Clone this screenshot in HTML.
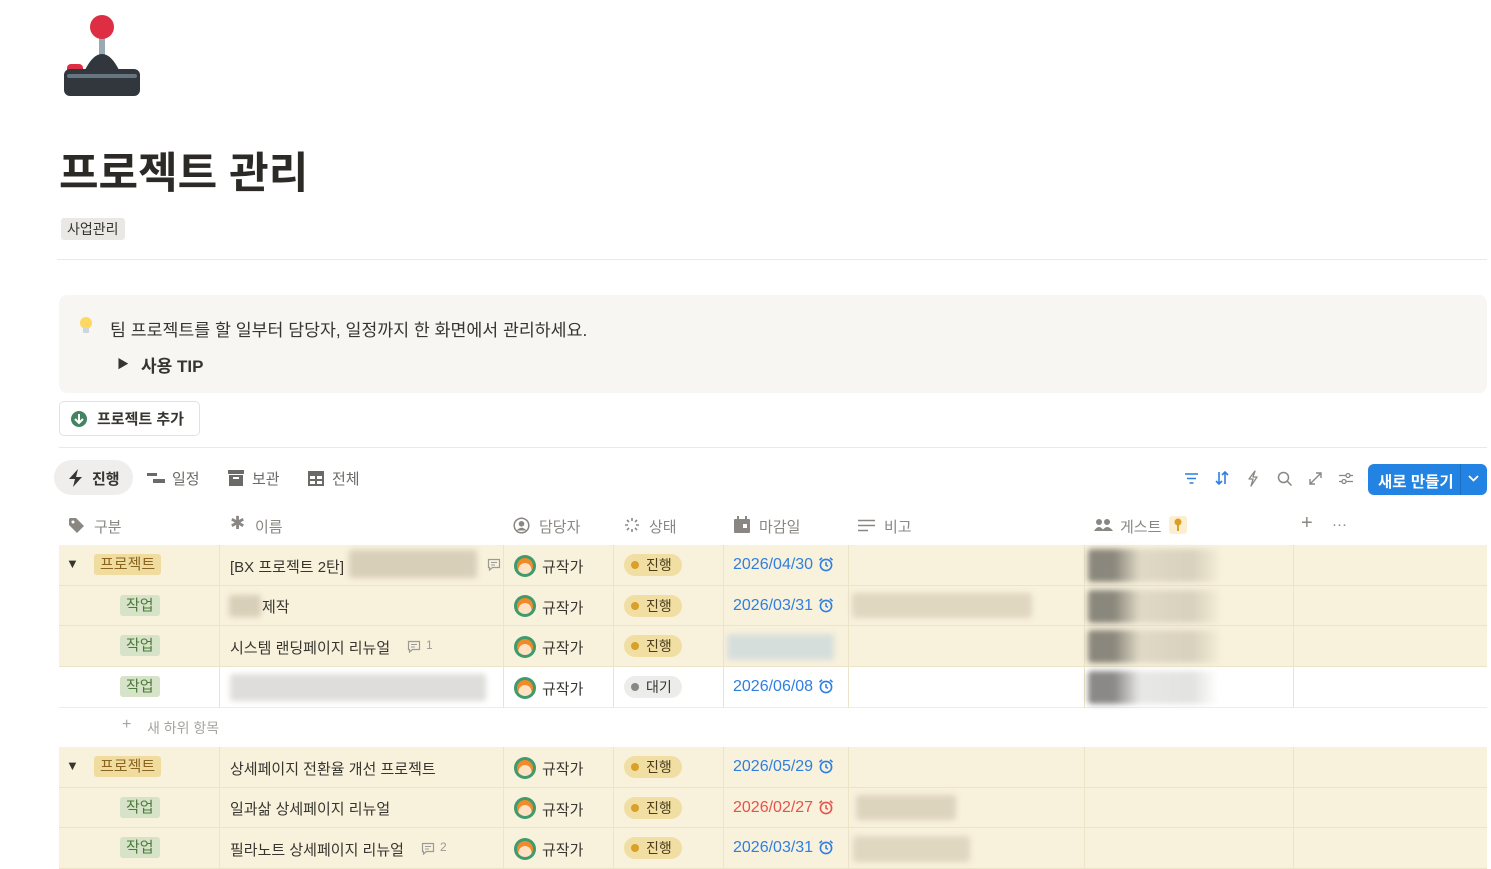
<!DOCTYPE html>
<html><head><meta charset="utf-8"><style>
*{box-sizing:border-box;margin:0;padding:0}
body{width:1491px;height:869px;overflow:hidden;background:#fff;font-family:"Liberation Sans","Noto Sans CJK KR",sans-serif;color:#37352f;position:relative}
.a{position:absolute}
.row{position:absolute;left:59px;width:1428px;border-bottom:1px solid #ece3c9}
.cream{background:#f8f1dc}
.t{position:absolute;font-size:15px;white-space:nowrap}
.tag{position:absolute;font-size:15px;padding:0 6px;border-radius:3px;line-height:21px}
.pj{background:#f1dca0;color:#8a6520}
.wk{background:#d6e3c8;color:#4c7a3a}
.pill{position:absolute;left:624px;font-size:14px;padding:0 10px 0 22px;border-radius:11px;line-height:22px;background:#f1dea2;color:#4a3d1e}
.pill:before{content:"";position:absolute;left:7px;top:7px;width:8px;height:8px;border-radius:50%;background:#d9a02a}
.pill.w{background:#ececea;color:#37352f}.pill.w:before{background:#8a8784}
.date{position:absolute;left:733px;font-size:16px;color:#2f7fe0;white-space:nowrap}
.date svg{vertical-align:-3px;margin-left:5px}
.av{position:absolute;left:514px;width:22px;height:22px;border-radius:50%;background:#3f9a6e;overflow:hidden}
.av:after{content:"";position:absolute;left:3px;top:3px;width:16px;height:16px;border-radius:50%;background:radial-gradient(circle at 50% 72%,#ffe1c4 45%,#f08a2a 47%)}
.nm{position:absolute;left:542px;font-size:15px}
.blur{position:absolute;filter:blur(3px);border-radius:3px}
.hd{position:absolute;top:516px;font-size:15px;color:#8a8782;white-space:nowrap}
</style></head><body>
<svg width="0" height="0" style="position:absolute"><defs>
<symbol id="clk" viewBox="0 0 16 16"><circle cx="8" cy="9" r="5.6" fill="none" stroke="currentColor" stroke-width="1.6"/><path d="M8 6v3.2l2 1.2" fill="none" stroke="currentColor" stroke-width="1.5"/><path d="M1.5 4.2L4 1.8M14.5 4.2L12 1.8" stroke="currentColor" stroke-width="1.6" fill="none"/></symbol>
</defs></svg>
<svg class="a" style="left:63px;top:14px" width="80" height="84" viewBox="0 0 80 84">
<rect x="36" y="20" width="6" height="22" fill="#99aab5"/>
<circle cx="39" cy="13" r="12" fill="#dd2e44"/>
<rect x="4" y="50" width="16" height="10" rx="4" fill="#dd2e44"/>
<path d="M22 56 Q30 40 39 40 Q48 40 56 56Z" fill="#31373d"/>
<rect x="1" y="55" width="76" height="27" rx="6" fill="#31373d"/>
<rect x="4" y="60" width="70" height="4" rx="2" fill="#66757f"/>
</svg>
<div class="t" style="left:59px;top:139px;font-size:43px;font-weight:bold;color:#2b2a27">프로젝트 관리</div>
<div class="t" style="left:61px;top:218px;font-size:14px;background:#e9e8e5;padding:1px 6px;border-radius:3px;color:#37352f">사업관리</div>
<div class="a" style="left:57px;top:259px;width:1430px;height:1px;background:#e9e9e7"></div>
<div class="a" style="left:59px;top:295px;width:1428px;height:98px;background:#f7f6f3;border-radius:8px"></div>
<svg class="a" style="left:79px;top:316px" width="14" height="20" viewBox="0 0 14 20"><circle cx="7" cy="7" r="6" fill="#ffd761"/><rect x="4" y="12" width="6" height="5" rx="1" fill="#ccd6dd"/></svg>
<div class="t" style="left:110px;top:316px;font-size:17.3px">팀 프로젝트를 할 일부터 담당자, 일정까지 한 화면에서 관리하세요.</div>
<div class="t" style="left:117px;top:355px;font-size:12px">▶</div>
<div class="t" style="left:141px;top:352px;font-size:17px;font-weight:bold">사용 TIP</div>
<div class="a" style="left:59px;top:401px;width:141px;height:35px;border:1px solid #e3e2e0;border-radius:5px"></div>
<svg class="a" style="left:70px;top:410px" width="18" height="18"><circle cx="9" cy="9" r="8" fill="#448361"/><path d="M9 4v9M5 9l4 4 4-4" stroke="#fff" stroke-width="2" fill="none"/></svg>
<div class="t" style="left:97px;top:408px;font-size:15px;font-weight:bold">프로젝트 추가</div>
<div class="a" style="left:59px;top:447px;width:1428px;height:1px;background:#e9e9e7"></div>
<div class="a" style="left:54px;top:460px;width:79px;height:35px;background:#efeeec;border-radius:18px"></div>
<svg class="a" style="left:68px;top:469px" width="16" height="18" viewBox="0 0 16 18"><path d="M10 0L1 10h6l-2 8 9-10H8z" fill="#37352f"/></svg>
<div class="t" style="left:92px;top:468px;font-size:15px;font-weight:bold">진행</div>
<svg class="a" style="left:147px;top:471px" width="18" height="14"><rect x="0" y="2" width="10" height="3" fill="#6b6a66"/><rect x="6" y="8" width="12" height="4" fill="#6b6a66"/></svg>
<div class="t" style="left:172px;top:468px;font-size:15px;color:#6b6a66">일정</div>
<svg class="a" style="left:228px;top:470px" width="16" height="16"><rect x="0" y="0" width="16" height="4" fill="#6b6a66"/><rect x="1" y="5" width="14" height="11" fill="#6b6a66"/><rect x="5" y="7" width="6" height="2" fill="#fff"/></svg>
<div class="t" style="left:252px;top:468px;font-size:15px;color:#6b6a66">보관</div>
<svg class="a" style="left:308px;top:471px" width="16" height="15"><rect x="0" y="0" width="16" height="15" fill="#6b6a66"/><rect x="2" y="5" width="5" height="3" fill="#fff"/><rect x="9" y="5" width="5" height="3" fill="#fff"/><rect x="2" y="10" width="5" height="3" fill="#fff"/><rect x="9" y="10" width="5" height="3" fill="#fff"/></svg>
<div class="t" style="left:332px;top:468px;font-size:15px;color:#6b6a66">전체</div>
<svg class="a" style="left:1184px;top:472px" width="15" height="13"><path d="M1 2h13M3 6.5h9M5.5 11h4" stroke="#2f7fe0" stroke-width="1.6"/></svg>
<svg class="a" style="left:1214px;top:470px" width="16" height="16"><path d="M5 2v12M2 11l3 3 3-3M11 14V2M8 5l3-3 3 3" stroke="#2f7fe0" stroke-width="1.6" fill="none"/></svg>
<svg class="a" style="left:1247px;top:470px" width="12" height="17"><path d="M8 1L2 9h4l-2 7 6-9H6z" stroke="#8a8782" stroke-width="1.3" fill="none" stroke-linejoin="round"/></svg>
<svg class="a" style="left:1277px;top:471px" width="16" height="16"><circle cx="6.5" cy="6.5" r="5" stroke="#8a8782" stroke-width="1.5" fill="none"/><path d="M10 10l4.5 4.5" stroke="#8a8782" stroke-width="1.5"/></svg>
<svg class="a" style="left:1308px;top:471px" width="15" height="15"><path d="M2 13L13 2M8 2h5v5M2 8v5h5" stroke="#8a8782" stroke-width="1.4" fill="none"/></svg>
<svg class="a" style="left:1338px;top:472px" width="16" height="13"><path d="M1 3.5h14M1 9.5h14" stroke="#8a8782" stroke-width="1.3"/><circle cx="10" cy="3.5" r="2" fill="#fff" stroke="#8a8782" stroke-width="1.3"/><circle cx="6" cy="9.5" r="2" fill="#fff" stroke="#8a8782" stroke-width="1.3"/></svg>
<div class="a" style="left:1368px;top:464px;width:119px;height:31px;background:#2383e2;border-radius:6px"></div>
<div class="a" style="left:1460px;top:464px;width:1px;height:31px;background:#1a6fc4"></div>
<div class="t" style="left:1378px;top:470px;font-size:15.5px;font-weight:bold;color:#fff">새로 만들기</div>
<svg class="a" style="left:1467px;top:474px" width="13" height="10"><path d="M2 2l4.5 4.5L11 2" stroke="#fff" stroke-width="1.8" fill="none"/></svg>
<div class="a" style="left:59px;top:545px;width:1428px;height:1px;background:#ece3c9"></div>
<svg class="a" style="left:68px;top:517px" width="17" height="17"><path d="M1 2v6l8 8 7-7-8-8H2z" fill="#8a8782"/><circle cx="5" cy="5" r="1.5" fill="#fff"/></svg>
<div class="hd" style="left:94px">구분</div>
<div class="hd" style="left:230px;font-size:18px;top:513px">✱</div>
<div class="hd" style="left:255px">이름</div>
<svg class="a" style="left:513px;top:517px" width="17" height="17"><circle cx="8.5" cy="8.5" r="7.3" fill="none" stroke="#8a8782" stroke-width="1.5"/><circle cx="8.5" cy="6.8" r="2.8" fill="#8a8782"/><path d="M3.6 13.5Q8.5 8 13.4 13.5" fill="#8a8782"/></svg>
<div class="hd" style="left:539px">담당자</div>
<svg class="a" style="left:624px;top:517px" width="16" height="16"><g stroke="#8a8782" stroke-width="1.6"><path d="M8 1v3M8 12v3M1 8h3M12 8h3M3 3l2 2M11 11l2 2M13 3l-2 2M3 13l2-2"/></g></svg>
<div class="hd" style="left:649px">상태</div>
<svg class="a" style="left:734px;top:516px" width="16" height="17"><rect x="0" y="3" width="16" height="14" rx="1" fill="#8a8782"/><rect x="3" y="0" width="2" height="4" fill="#8a8782"/><rect x="11" y="0" width="2" height="4" fill="#8a8782"/><rect x="9" y="8" width="4" height="4" fill="#fff"/></svg>
<div class="hd" style="left:759px">마감일</div>
<svg class="a" style="left:858px;top:519px" width="17" height="13"><path d="M0 1.5h17M0 6.5h17M0 11.5h10" stroke="#8a8782" stroke-width="1.6"/></svg>
<div class="hd" style="left:884px">비고</div>
<svg class="a" style="left:1094px;top:518px" width="19" height="14"><circle cx="5" cy="4" r="3" fill="#8a8782"/><circle cx="13" cy="4" r="3" fill="#8a8782"/><path d="M0 13q5-8 10 0zM8 13q5-8 11 0z" fill="#8a8782"/></svg>
<div class="hd" style="left:1120px">게스트</div>
<div class="a" style="left:1169px;top:516px;width:18px;height:18px;background:#fbefcf;border-radius:3px"></div>
<svg class="a" style="left:1174px;top:518px" width="8" height="14"><circle cx="4" cy="4" r="3.5" fill="#d9a02a"/><rect x="3" y="6" width="2" height="7" fill="#d9a02a"/></svg>
<div class="hd" style="left:1301px;font-size:20px;top:512px">+</div>
<div class="hd" style="left:1332px">···</div>

<div class="row cream" style="top:545px;height:41px"></div>
<div class="row cream" style="top:586px;height:40px"></div>
<div class="row cream" style="top:626px;height:41px"></div>
<div class="row" style="top:667px;height:41px;border-color:#ececea"></div>
<div class="row cream" style="top:747px;height:41px"></div>
<div class="row cream" style="top:788px;height:40px"></div>
<div class="row cream" style="top:828px;height:41px"></div>
<div class="a" style="left:219px;top:545px;width:1px;height:163px;background:#ece3c9"></div>
<div class="a" style="left:503px;top:545px;width:1px;height:163px;background:#ece3c9"></div>
<div class="a" style="left:613px;top:545px;width:1px;height:163px;background:#ece3c9"></div>
<div class="a" style="left:723px;top:545px;width:1px;height:163px;background:#ece3c9"></div>
<div class="a" style="left:848px;top:545px;width:1px;height:163px;background:#ece3c9"></div>
<div class="a" style="left:1084px;top:545px;width:1px;height:163px;background:#ece3c9"></div>
<div class="a" style="left:1293px;top:545px;width:1px;height:163px;background:#ece3c9"></div>
<div class="a" style="left:219px;top:747px;width:1px;height:122px;background:#ece3c9"></div>
<div class="a" style="left:503px;top:747px;width:1px;height:122px;background:#ece3c9"></div>
<div class="a" style="left:613px;top:747px;width:1px;height:122px;background:#ece3c9"></div>
<div class="a" style="left:723px;top:747px;width:1px;height:122px;background:#ece3c9"></div>
<div class="a" style="left:848px;top:747px;width:1px;height:122px;background:#ece3c9"></div>
<div class="a" style="left:1084px;top:747px;width:1px;height:122px;background:#ece3c9"></div>
<div class="a" style="left:1293px;top:747px;width:1px;height:122px;background:#ece3c9"></div>

<div class="t" style="left:66px;top:556px;font-size:13px">▼</div>
<div class="tag pj" style="left:94px;top:554px">프로젝트</div>
<div class="t" style="left:230px;top:556px">[BX 프로젝트 2탄]</div>
<div class="blur" style="left:349px;top:550px;width:128px;height:28px;background:#d8cfb8"></div>
<svg class="a" style="left:487px;top:558px" width="14" height="13"><path d="M1.5 1.5h11v8h-7l-3 2.5v-2.5h-1z" fill="none" stroke="#9b9a97" stroke-width="1.2"/><path d="M4 4.5h6M4 7h4" stroke="#9b9a97"/></svg>
<div class="av" style="top:555px"></div><div class="nm" style="top:556px">규작가</div>
<div class="pill" style="top:554px">진행</div>
<div class="date" style="top:556px">2026/04/30<svg width="16" height="16"><use href="#clk"/></svg></div>
<div class="blur" style="left:1088px;top:549px;width:130px;height:33px;background:linear-gradient(90deg,#8a877c 20%,#e0d9c5 40%,#d8d1bd 80%,#f2ebd6)"></div>

<div class="tag wk" style="left:120px;top:595px">작업</div>
<div class="blur" style="left:229px;top:595px;width:32px;height:22px;background:#d8cfb8"></div>
<div class="t" style="left:262px;top:596px">제작</div>
<div class="av" style="top:595px"></div><div class="nm" style="top:597px">규작가</div>
<div class="pill" style="top:595px">진행</div>
<div class="date" style="top:597px">2026/03/31<svg width="16" height="16"><use href="#clk"/></svg></div>
<div class="blur" style="left:852px;top:593px;width:180px;height:25px;background:#e0d7c0"></div>
<div class="blur" style="left:1088px;top:590px;width:130px;height:33px;background:linear-gradient(90deg,#8a877c 20%,#e0d9c5 40%,#d8d1bd 80%,#f2ebd6)"></div>

<div class="tag wk" style="left:120px;top:635px">작업</div>
<div class="t" style="left:230px;top:637px">시스템 랜딩페이지 리뉴얼</div>
<svg class="a" style="left:407px;top:640px" width="14" height="13"><path d="M1.5 1.5h11v8h-7l-3 2.5v-2.5h-1z" fill="none" stroke="#9b9a97" stroke-width="1.2"/><path d="M4 4.5h6M4 7h4" stroke="#9b9a97"/></svg>
<div class="t" style="left:426px;top:638px;font-size:12px;color:#9b9a97">1</div>
<div class="av" style="top:636px"></div><div class="nm" style="top:637px">규작가</div>
<div class="pill" style="top:635px">진행</div>
<div class="blur" style="left:727px;top:634px;width:107px;height:26px;background:#d6dedb"></div>
<div class="blur" style="left:1088px;top:630px;width:130px;height:33px;background:linear-gradient(90deg,#8a877c 20%,#e0d9c5 40%,#d8d1bd 80%,#f2ebd6)"></div>

<div class="tag wk" style="left:120px;top:676px">작업</div>
<div class="blur" style="left:230px;top:674px;width:256px;height:27px;background:#dedddb"></div>
<div class="av" style="top:677px"></div><div class="nm" style="top:678px">규작가</div>
<div class="pill w" style="top:676px">대기</div>
<div class="date" style="top:678px">2026/06/08<svg width="16" height="16"><use href="#clk"/></svg></div>
<div class="blur" style="left:1088px;top:671px;width:130px;height:33px;background:linear-gradient(90deg,#8a8987 20%,#e8e8e6 40%,#e2e2e0 80%,#fff)"></div>

<div class="t" style="left:122px;top:716px;font-size:16px;color:#a5a4a0">+</div>
<div class="t" style="left:147px;top:718px;font-size:14px;color:#a5a4a0">새 하위 항목</div>

<div class="t" style="left:66px;top:758px;font-size:13px">▼</div>
<div class="tag pj" style="left:94px;top:756px">프로젝트</div>
<div class="t" style="left:230px;top:758px">상세페이지 전환율 개선 프로젝트</div>
<div class="av" style="top:757px"></div><div class="nm" style="top:758px">규작가</div>
<div class="pill" style="top:756px">진행</div>
<div class="date" style="top:758px">2026/05/29<svg width="16" height="16"><use href="#clk"/></svg></div>

<div class="tag wk" style="left:120px;top:797px">작업</div>
<div class="t" style="left:230px;top:798px">일과삶 상세페이지 리뉴얼</div>
<div class="av" style="top:797px"></div><div class="nm" style="top:799px">규작가</div>
<div class="pill" style="top:797px">진행</div>
<div class="date" style="top:799px;color:#e5534b">2026/02/27<svg width="16" height="16"><use href="#clk"/></svg></div>
<div class="blur" style="left:856px;top:795px;width:100px;height:25px;background:#ddd4bd"></div>

<div class="tag wk" style="left:120px;top:837px">작업</div>
<div class="t" style="left:230px;top:839px">필라노트 상세페이지 리뉴얼</div>
<svg class="a" style="left:421px;top:842px" width="14" height="13"><path d="M1.5 1.5h11v8h-7l-3 2.5v-2.5h-1z" fill="none" stroke="#9b9a97" stroke-width="1.2"/><path d="M4 4.5h6M4 7h4" stroke="#9b9a97"/></svg>
<div class="t" style="left:440px;top:840px;font-size:12px;color:#9b9a97">2</div>
<div class="av" style="top:838px"></div><div class="nm" style="top:839px">규작가</div>
<div class="pill" style="top:837px">진행</div>
<div class="date" style="top:839px">2026/03/31<svg width="16" height="16"><use href="#clk"/></svg></div>
<div class="blur" style="left:853px;top:836px;width:117px;height:26px;background:#e0d7c0"></div>
</body></html>
